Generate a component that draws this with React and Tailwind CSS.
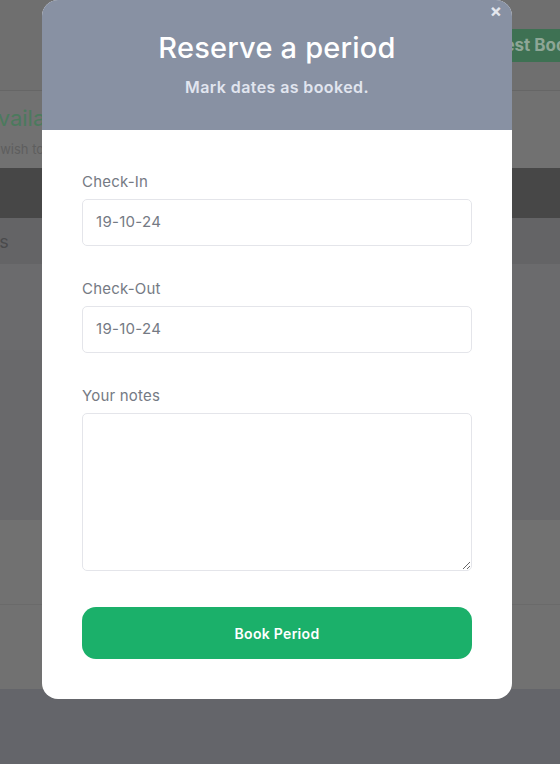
import React from "react";

export default function App() {
  const font = { fontFamily: "Inter, 'Open Sans', sans-serif" };
  return (
    <div className="relative h-[764px] w-[560px] overflow-hidden bg-[#64656a]" style={font}>
      {/* background page (dimmed) */}
      <div className="flex flex-col">
        <div className="flex h-[91px] items-start border-b border-[#666666] bg-[#6f6f6f] pl-[452px] pt-[29px]">
          <div className="flex h-[33px] shrink-0 items-center whitespace-nowrap rounded-[4px] bg-[#3e7153] px-[10px] text-[17px] font-bold text-[#8ea696]">
            Request Booking
          </div>
        </div>
        <div className="flex h-[77px] flex-col bg-[#717171] pt-[13px]">
          <div className="-ml-[16px] whitespace-nowrap text-[22px] leading-[28px] text-[#4b7a5d]">Availability</div>
          <div className="-ml-[38px] mt-[8px] whitespace-nowrap text-[13px] leading-[18px] text-[#5e5e5e]">If you wish to</div>
        </div>
        <div className="h-[50px] bg-[#474747]" />
        <div className="flex h-[46px] items-center whitespace-nowrap bg-[#646466] text-[18px] text-[#4a4a4c]">
          <span className="-ml-[40px]">Dates</span>
        </div>
        <div className="h-[86px] bg-[#6b6b6d]" />
        <div className="h-[170px] bg-[#69696b]" />
        <div className="h-[85px] border-b border-[#6a6a6a] bg-[#717171]" />
        <div className="h-[84px] bg-[#717171]" />
      </div>

      {/* modal */}
      <div className="absolute inset-0 flex items-start pl-[42px]">
        <div className="w-[470px] overflow-hidden rounded-[16px] bg-white">
          <div className="relative flex h-[130px] flex-col items-center bg-[#8891a3] pt-[29px]">
            <button className="absolute right-[10px] top-[1px] text-[18px] font-bold leading-[20px] text-[#e4e7ee]">×</button>
            <h2 className="text-[29px] font-medium leading-[38px] tracking-[0.2px] text-white">Reserve a period</h2>
            <p className="mt-[9px] text-[16px] font-semibold leading-[22px] tracking-[0.4px] text-[#e1e5ef]">Mark dates as booked.</p>
          </div>
          <div className="flex flex-col px-[40px] pb-[40px] pt-[42px]">
            <label className="text-[15px] leading-[20px] tracking-[0.2px] text-[#757a84]">Check-In</label>
            <div className="mt-[7px] flex h-[47px] items-center rounded-[5px] border border-[#e4e5ea] px-[13px] text-[15px] tracking-[0.3px] text-[#757a84]">
              19-10-24
            </div>
            <label className="mt-[33px] text-[15px] leading-[20px] tracking-[0.2px] text-[#757a84]">Check-Out</label>
            <div className="mt-[7px] flex h-[47px] items-center rounded-[5px] border border-[#e4e5ea] px-[13px] text-[15px] tracking-[0.3px] text-[#757a84]">
              19-10-24
            </div>
            <label className="mt-[33px] text-[15px] leading-[20px] tracking-[0.2px] text-[#757a84]">Your notes</label>
            <textarea className="mt-[7px] h-[158px] rounded-[5px] border border-[#e4e5ea] outline-none" />
            <button className="mt-[36px] h-[52px] rounded-[14px] bg-[#1bb06a] text-[14px] font-semibold tracking-[0.3px] text-white">
              Book Period
            </button>
          </div>
        </div>
      </div>
    </div>
  );
}
